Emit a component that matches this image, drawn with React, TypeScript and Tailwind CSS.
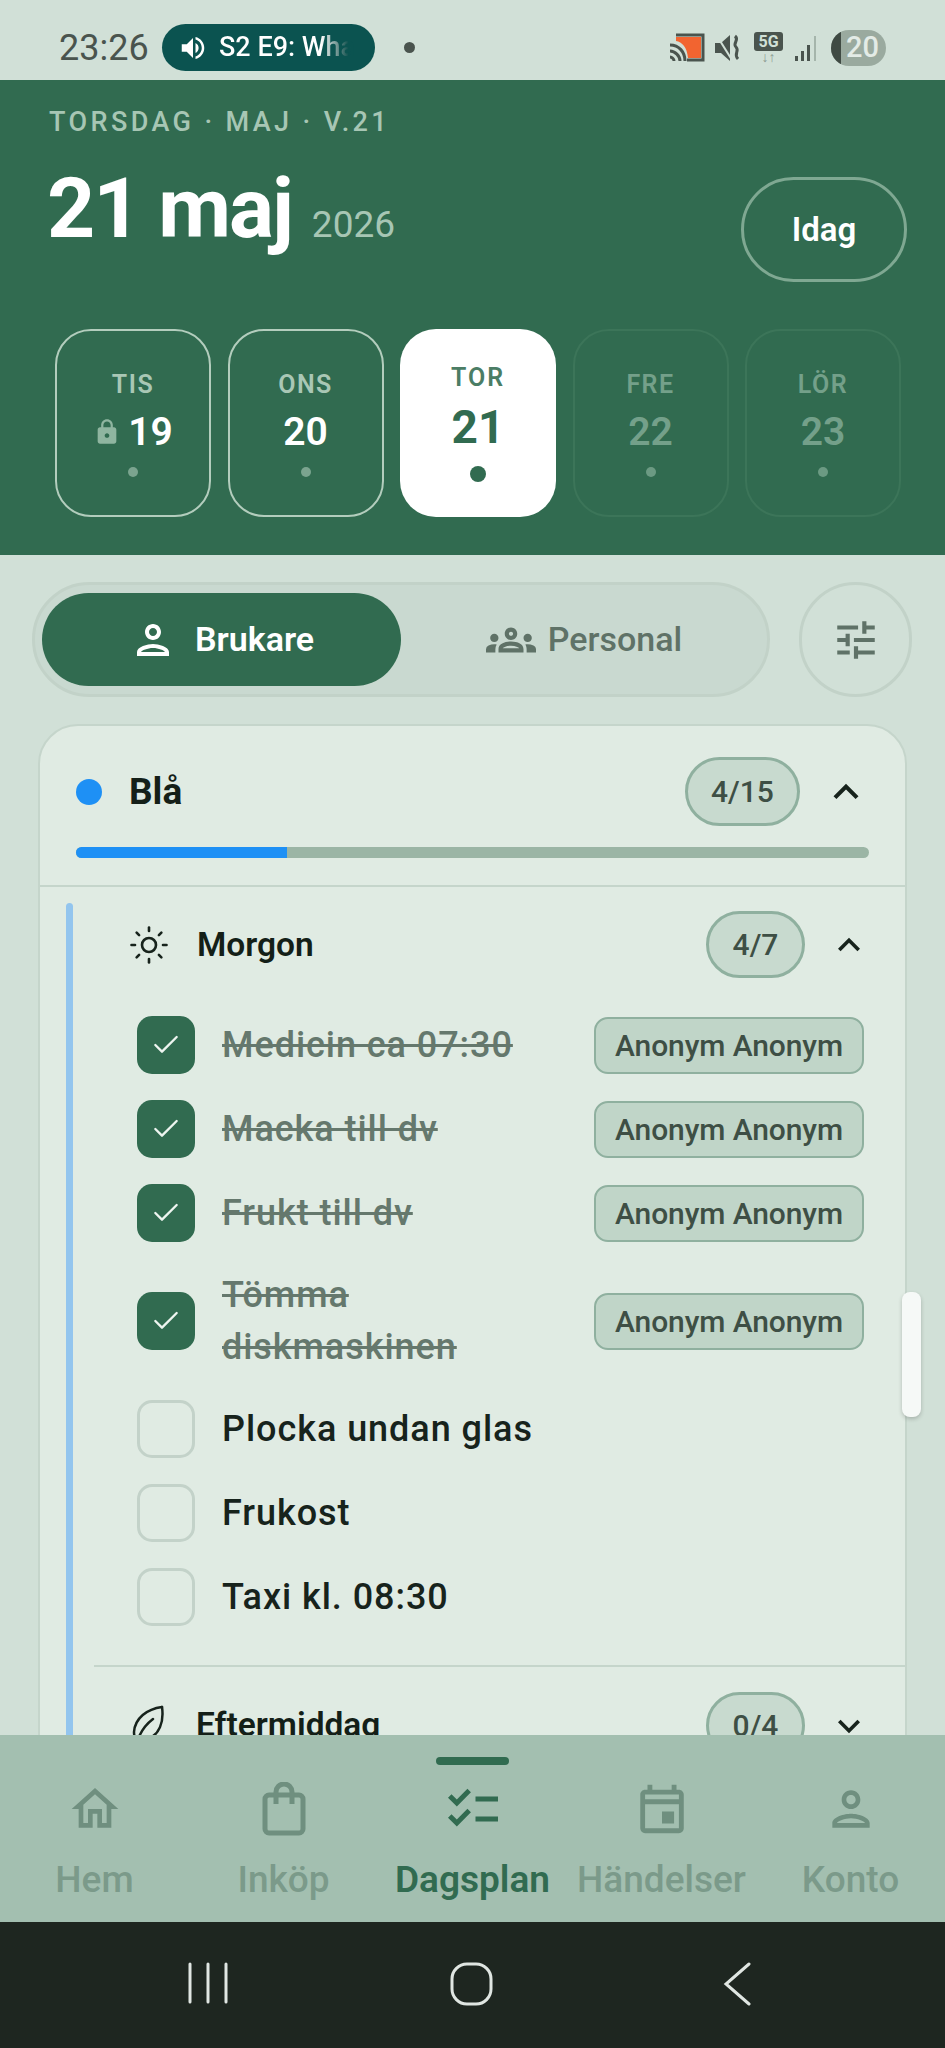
import React from "react";
import { Check, Sun } from "lucide-react";
import {
  MdOutlinePerson, MdOutlineGroups, MdTune, MdLock, MdOutlineHome, MdChecklist,
  MdOutlineEvent, MdKeyboardArrowUp, MdKeyboardArrowDown, MdVolumeUp,
} from "react-icons/md";

function Day({ label, num, state, lock }: { label: string; num: string; state: "past" | "now" | "future"; lock?: boolean }) {
  if (state === "now") {
    return (
      <div className="flex h-[188px] w-[156px] flex-col items-center rounded-[36px] bg-white pt-[35px]">
        <div className="text-[25px] leading-[28px] font-semibold tracking-[2px] text-[#4b7d65]">{label}</div>
        <div className="mt-[10px] text-[46px] leading-[50px] font-bold text-[#316b50]">{num}</div>
        <div className="mt-[14px] h-[16px] w-[16px] rounded-full bg-[#316b50]" />
      </div>
    );
  }
  const past = state === "past";
  return (
    <div className={`flex h-[188px] w-[156px] flex-col items-center rounded-[36px] border-2 pt-[40px] ${past ? "border-[#b3cdbd]" : "border-[#3c7559]"}`}>
      <div className={`text-[25px] leading-[28px] font-semibold tracking-[1.5px] ${past ? "text-[#a9c7b5]" : "text-[#74a08a]"}`}>{label}</div>
      <div className={`mt-[10px] flex h-[46px] items-center gap-[7px] text-[39px] leading-[46px] font-semibold ${past ? "text-white" : "text-[#74a08a]"}`}>
        {lock && <MdLock className="text-[28px] text-[#8fb5a0]" />}
        {num}
      </div>
      <div className={`mt-[12px] h-[10px] w-[10px] rounded-full ${past ? "bg-[#7ba48f]" : "bg-[#6c9a83]"}`} />
    </div>
  );
}

function Task({ text, done, extra }: { text: React.ReactNode; done?: boolean; extra?: boolean }) {
  return (
    <div className={`flex items-center pl-[43px] pr-[5px] ${extra ? "my-[1px]" : ""}`}>
      {done ? (
        <div className="flex h-[58px] w-[58px] shrink-0 items-center justify-center rounded-[15px] bg-[#316b50]">
          <Check className="h-[32px] w-[32px] text-[#eef5f0]" strokeWidth={1.75} />
        </div>
      ) : (
        <div className="h-[58px] w-[58px] shrink-0 rounded-[15px] border-[3px] border-[#c3d2c9]" />
      )}
      <div className={`ml-[27px] w-[340px] text-[36px] leading-[52px] font-medium tracking-[0.95px] ${done ? "text-[#65786d] line-through" : "text-[#17231c]"}`}>{text}</div>
      {done && (
        <div className="ml-auto flex h-[57px] w-[270px] items-center justify-center rounded-[14px] border-2 border-[#8fb09f] bg-[#c0d5c8] text-[30px] font-medium tracking-[-0.1px] text-[#3e4f45]">
          Anonym Anonym
        </div>
      )}
    </div>
  );
}

function NavItem({ label, icon, active }: { label: string; icon: React.ReactNode; active?: boolean }) {
  return (
    <div className={`relative flex flex-1 flex-col items-center pt-[44px] ${active ? "text-[#316b50]" : "text-[#7b9a8a]"}`}>
      {active && <div className="absolute top-[22px] h-[8px] w-[73px] rounded-full bg-[#316b50]" />}
      <div className={`flex h-[60px] items-center justify-center ${active ? "text-[#316b50]" : "text-[#6f8f7f]"}`}>{icon}</div>
      <div className={`mt-[16px] text-[37px] leading-[50px] whitespace-nowrap ${active ? "font-semibold" : "font-medium"}`}>{label}</div>
    </div>
  );
}

export default function App() {
  return (
    <div className="relative flex h-[2048px] w-[945px] flex-col overflow-hidden bg-[#d1e0d7] font-[Roboto,sans-serif]">
      {/* status bar */}
      <div className="flex h-[80px] shrink-0 items-center bg-[#d1e0d7] pt-[15px] pl-[59px] pr-[59px]">
        <div className="w-[91px] text-[36px] leading-none whitespace-nowrap text-[#4a544e]">23:26</div>
        <div className="ml-[12px] flex h-[47px] w-[213px] shrink-0 items-center overflow-hidden rounded-full bg-[#0b5350] pl-[16px] text-[27px] font-medium whitespace-nowrap text-white">
          <MdVolumeUp className="mr-[11px] shrink-0 text-[30px]" />
          <span className="bg-gradient-to-r from-white from-75% to-[#0b5350] to-95% bg-clip-text text-transparent">S2 E9: Wha</span>
        </div>
        <div className="ml-[29px] h-[11px] w-[11px] rounded-full bg-[#4a544e]" />
        <div className="ml-auto flex items-center">
          <svg width="37" height="30" viewBox="0 0 37 30">
            <path d="M8 2h27v25H19" fill="none" stroke="#4a544e" strokeWidth="3" />
            <path d="M8 4h25v21H20C19 14 14 9 8 8z" fill="#f26430" />
            <path d="M2 12c9 0 15 7 15 16M2 18c5 0 10 5 10 10M2 24c2 0 4 2 4 4" fill="none" stroke="#4a544e" strokeWidth="3" />
          </svg>
          <svg className="ml-[9px]" width="28" height="30" viewBox="0 0 28 30">
            <path d="M1 10h6l9-8v26l-9-8H1z" fill="#4a544e" />
            <path d="M3 3l15 24" stroke="#d1e0d7" strokeWidth="2" />
            <path d="M21 3c5 4-3 7 1 11s-3 7 2 12" fill="none" stroke="#4a544e" strokeWidth="3" />
          </svg>
          <div className="ml-[12px] flex w-[29px] flex-col items-center">
            <div className="h-[19px] w-[29px] rounded-[3px] bg-[#4a544e] text-center text-[16px] leading-[19px] font-bold text-[#d1e0d7]">5G</div>
            <div className="text-[14px] leading-[13px] text-[#8d9c93]">↓↑</div>
          </div>
          <svg className="ml-[11px]" width="24" height="30" viewBox="0 0 24 30">
            <rect x="1" y="23" width="3" height="5" fill="#4a544e" />
            <rect x="7" y="18" width="3" height="10" fill="#4a544e" />
            <rect x="13" y="12" width="3" height="16" fill="#4a544e" />
            <rect x="20" y="3" width="2" height="25" fill="#a5b5ab" />
          </svg>
          <div className="relative ml-[13px] flex h-[36px] w-[55px] items-center justify-end overflow-hidden rounded-full bg-[#9aaa9f] pr-[7px] text-[29px] leading-none font-medium text-[#e3ebe6]">
            <div className="absolute inset-y-0 left-0 w-[10px] bg-[#3f4a43]" />
            20
          </div>
        </div>
      </div>

      {/* header */}
      <div className="h-[475px] shrink-0 bg-[#316b50] pt-[24px]">
        <div className="pl-[49px] text-[27px] leading-[36px] font-medium tracking-[3.4px] text-[#a7c6b4]">TORSDAG · MAJ · V.21</div>
        <div className="mt-[37px] flex h-[105px] items-start justify-between pl-[47px] pr-[38px]">
          <div className="flex items-baseline">
            <span className="text-[84px] leading-[64px] font-bold tracking-[-2px] text-white">21 maj</span>
            <span className="ml-[20px] text-[37px] leading-[40px] text-[#a7c6b4]">2026</span>
          </div>
          <div className="flex h-[105px] w-[166px] items-center justify-center rounded-full border-[3px] border-[#7fa892] text-[33px] font-semibold text-white">Idag</div>
        </div>
        <div className="mt-[47px] flex gap-[16.5px] pl-[55px]">
          <Day label="TIS" num="19" state="past" lock />
          <Day label="ONS" num="20" state="past" />
          <Day label="TOR" num="21" state="now" />
          <Day label="FRE" num="22" state="future" />
          <Day label="LÖR" num="23" state="future" />
        </div>
      </div>

      {/* body */}
      <div className="min-h-0 flex-1 overflow-hidden px-[32px] pt-[27px]">
        <div className="flex items-center gap-[29px]">
          <div className="flex h-[115px] w-[738px] items-center rounded-full border-[3px] border-[#c2d2c8] bg-[#c9d9d0] pl-[7px]">
            <div className="flex h-[93px] w-[359px] items-center justify-center gap-[18px] rounded-full bg-[#316b50] text-[34px] font-semibold text-white">
              <MdOutlinePerson className="text-[48px]" />
              Brukare
            </div>
            <div className="flex h-[93px] flex-1 items-center justify-center gap-[12px] text-[34px] font-medium text-[#5f7267]">
              <MdOutlineGroups className="text-[50px]" />
              Personal
            </div>
          </div>
          <div className="flex h-[115px] w-[113px] items-center justify-center rounded-full border-[3px] border-[#c2d2c8] bg-[#d1e0d7] text-[#5f7267]">
            <MdTune className="text-[50px]" />
          </div>
        </div>

        <div className="mx-[6px] mt-[27px] rounded-t-[40px] border-2 border-[#c5d5cb] bg-[#e0ebe3] pb-[60px]">
          <div className="px-[36px] pt-[31px]">
            <div className="flex h-[69px] items-center">
              <div className="h-[26px] w-[26px] rounded-full bg-[#1e90f5]" />
              <div className="ml-[27px] text-[37px] font-bold text-[#141f18]">Blå</div>
              <div className="ml-auto flex h-[69px] w-[115px] items-center justify-center rounded-full border-[3px] border-[#8fb09f] bg-[#c8dacf] text-[30px] font-medium text-[#3e4f45]">4/15</div>
              <MdKeyboardArrowUp className="ml-[21px] mr-[-2px] text-[50px] text-[#17231c]" />
            </div>
            <div className="mt-[21px] h-[11px] overflow-hidden rounded-full bg-[#9bb5a5]">
              <div className="h-full w-[211px] bg-[#1e90f5]" />
            </div>
          </div>
          <div className="mt-[27px] flex border-t-2 border-[#c5d5cb] pr-[36px] pl-[26px] pt-[16px]">
            <div className="w-[7px] shrink-0 rounded-t-full bg-[#93c5ee]" />
            <div className="min-w-0 flex-1 pl-[21px]">
              <div className="mt-[8px] flex h-[67px] items-center pl-[34px]">
                <Sun className="h-[42px] w-[42px] text-[#17231c]" strokeWidth={1.5} />
                <div className="ml-[27px] pt-[2px] text-[33.5px] font-semibold text-[#141f18]">Morgon</div>
                <div className="ml-auto flex h-[67px] w-[99px] items-center justify-center rounded-full border-[3px] border-[#8fb09f] bg-[#c8dacf] text-[30px] font-medium text-[#3e4f45]">4/7</div>
                <MdKeyboardArrowUp className="ml-[22px] mr-[-2px] text-[44px] text-[#17231c]" />
              </div>
              <div className="mt-[38px] flex flex-col gap-[26px]">
                <Task text="Medicin ca 07:30" done />
                <Task text="Macka till dv" done />
                <Task text="Frukt till dv" done />
                <Task text={<>Tömma<br />diskmaskinen</>} done extra />
                <Task text="Plocka undan glas" />
                <Task text="Frukost" />
                <Task text="Taxi kl. 08:30" />
              </div>
              <div className="mt-[39px] mr-[-36px] border-t-2 border-[#c5d5cb]" />
              <div className="mt-[25px] flex h-[67px] items-center pl-[34px]">
                <svg width="40" height="44" viewBox="0 0 40 44" fill="none" stroke="#17231c" strokeWidth="2.5" strokeLinecap="round" strokeLinejoin="round">
                  <path d="M34 3C19 5 7 14 6 28c0 5 2 9 6 11" />
                  <path d="M34 3c2 14-2 29-16 32-2 .4-5 0-7-2" />
                  <path d="M8 42c3-13 9-21 17-27" />
                </svg>
                <div className="ml-[28px] text-[33.5px] font-semibold text-[#141f18]">Eftermiddag</div>
                <div className="ml-auto flex h-[67px] w-[99px] items-center justify-center rounded-full border-[3px] border-[#8fb09f] bg-[#c8dacf] text-[30px] font-medium text-[#3e4f45]">0/4</div>
                <MdKeyboardArrowDown className="ml-[22px] mr-[-2px] text-[44px] text-[#17231c]" />
              </div>
            </div>
          </div>
        </div>
      </div>

      {/* scrollbar thumb */}
      <div className="absolute top-[1292px] left-[902px] h-[125px] w-[19px] rounded-[8px] bg-[#f6f9f7] shadow-[0_2px_4px_rgba(0,0,0,0.2)]" />

      {/* nav */}
      <div className="flex h-[187px] shrink-0 bg-[#a3bfb0]">
        <NavItem label="Hem" icon={<MdOutlineHome className="text-[56px]" />} />
        <NavItem
          label="Inköp"
          icon={
            <svg width="44" height="54" viewBox="0 0 44 54" fill="none" stroke="currentColor" strokeWidth="5" strokeLinejoin="round">
              <rect x="3" y="13" width="38" height="38" rx="4" />
              <path d="M14 22V10a8 8 0 0 1 16 0v12" />
            </svg>
          }
        />
        <NavItem label="Dagsplan" active icon={<MdChecklist className="text-[60px]" />} />
        <NavItem label="Händelser" icon={<MdOutlineEvent className="text-[58px]" />} />
        <NavItem label="Konto" icon={<MdOutlinePerson className="text-[56px]" />} />
      </div>

      {/* android nav */}
      <div className="flex h-[126px] shrink-0 items-start bg-[#1e2620] pt-[40px]">
        <svg width="945" height="46" viewBox="0 0 945 46" fill="none" stroke="#e0e6e2" strokeWidth="3" strokeLinecap="round">
          <path d="M190 2v38M208 2v38M226 2v38" />
          <rect x="452" y="2" width="39" height="40" rx="15" />
          <path d="M749 2l-23 20 23 20" />
        </svg>
      </div>
    </div>
  );
}
